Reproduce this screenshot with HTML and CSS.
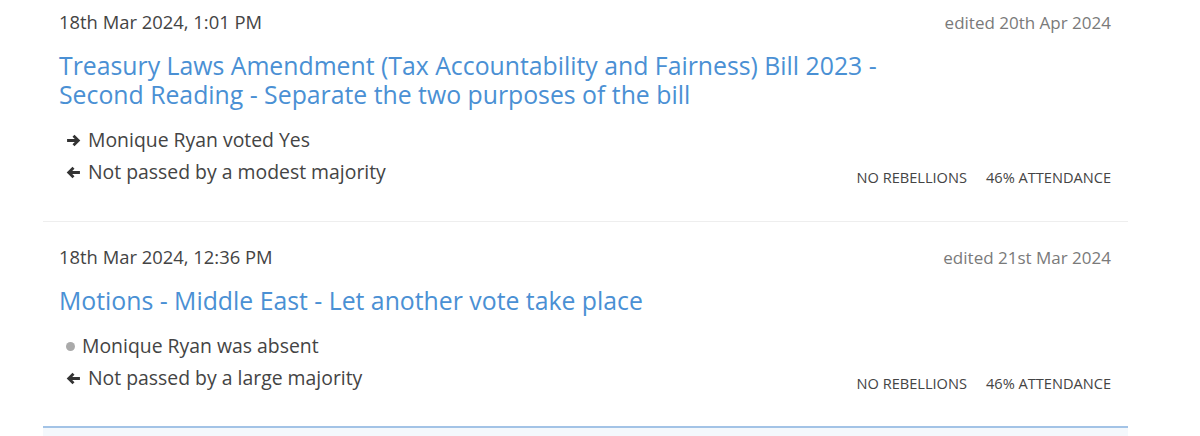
FILE: index.html
```html
<!DOCTYPE html>
<html lang="en">
  <head>
    <meta charset="UTF-8" />
    <title>Divisions</title>
    <link rel="stylesheet" href="styles.css">
  </head>
  <body>
    <ul class="division-list">
      <li class="division">
        <div class="division-head">
          <span class="division-date">18th Mar 2024, 1:01 PM</span>
          <span class="division-edited">edited 20th Apr 2024</span>
        </div>
        <a class="division-title" href="#">Treasury Laws Amendment (Tax Accountability and Fairness) Bill 2023 -<br>Second Reading - Separate the two purposes of the bill</a>
        <div class="division-foot">
          <ul class="division-votes">
            <li>
              <svg class="icon" viewBox="0 0 14 12"><path d="M1 6h11M7 1.5l4.5 4.5L7 10.5" /></svg>
              Monique Ryan voted Yes
            </li>
            <li>
              <svg class="icon" viewBox="0 0 14 12"><path d="M13 6H2M7 1.5L2.5 6 7 10.5" /></svg>
              Not passed by a modest majority
            </li>
          </ul>
          <div class="division-stats">
            <span>No rebellions</span>
            <span>46% attendance</span>
          </div>
        </div>
      </li>
      <li class="division">
        <div class="division-head">
          <span class="division-date">18th Mar 2024, 12:36 PM</span>
          <span class="division-edited">edited 21st Mar 2024</span>
        </div>
        <a class="division-title" href="#">Motions - Middle East - Let another vote take place</a>
        <div class="division-foot">
          <ul class="division-votes">
            <li class="absent">
              <span class="dot"></span>
              Monique Ryan was absent
            </li>
            <li>
              <svg class="icon" viewBox="0 0 14 12"><path d="M13 6H2M7 1.5L2.5 6 7 10.5" /></svg>
              Not passed by a large majority
            </li>
          </ul>
          <div class="division-stats">
            <span>No rebellions</span>
            <span>46% attendance</span>
          </div>
        </div>
      </li>
      <li class="division division-next"></li>
    </ul>
  </body>
</html>
```

FILE: styles.css
```css
body {
  font-family: "Open Sans", "Noto Sans", sans-serif;
  margin: 0;
  background-color: #fff;
  color: #444;
  overflow: hidden;
}

.division-list {
  list-style-type: none;
  margin: -13px 0 0 43px;
  padding: 0;
  width: 1085px;
}

.division {
  padding: 22px 17px 33px 16px;
  border-bottom: 1px solid #eee;
}

.division:nth-last-child(2) {
  border-bottom: none;
  padding-bottom: 32px;
}

.division-head {
  display: flex;
  justify-content: space-between;
  align-items: baseline;
}

.division-date {
  font-size: 18.4px;
  color: #444;
}

.division-edited {
  font-size: 17px;
  color: #7a7a7a;
}

.division-title {
  display: block;
  margin-top: 17px;
  font-size: 24.8px;
  line-height: 29px;
  color: #4a90d4;
  text-decoration: none;
}

.division-foot {
  display: flex;
  justify-content: space-between;
  align-items: flex-end;
  margin-top: 15px;
}

.division-votes {
  list-style-type: none;
  margin: 0;
  padding: 0 0 0 7px;
}

.division-votes li {
  display: flex;
  align-items: center;
  gap: 7px;
  font-size: 19.4px;
  line-height: 32px;
}

.icon {
  width: 15px;
  height: 13px;
  fill: none;
  stroke: #333;
  stroke-width: 2.6;
}

.dot {
  display: inline-block;
  width: 9px;
  height: 9px;
  border-radius: 50%;
  background-color: #aaa;
}

.division-votes li.absent {
  gap: 7px;
}

.division-stats {
  display: flex;
  gap: 19px;
  font-size: 14.6px;
  text-transform: uppercase;
  color: #444;
  padding-bottom: 1px;
}

.division-next {
  border-top: 2px solid #a3c3e6;
  background-color: #f4f8fc;
  height: 8px;
  padding: 0;
}
```
